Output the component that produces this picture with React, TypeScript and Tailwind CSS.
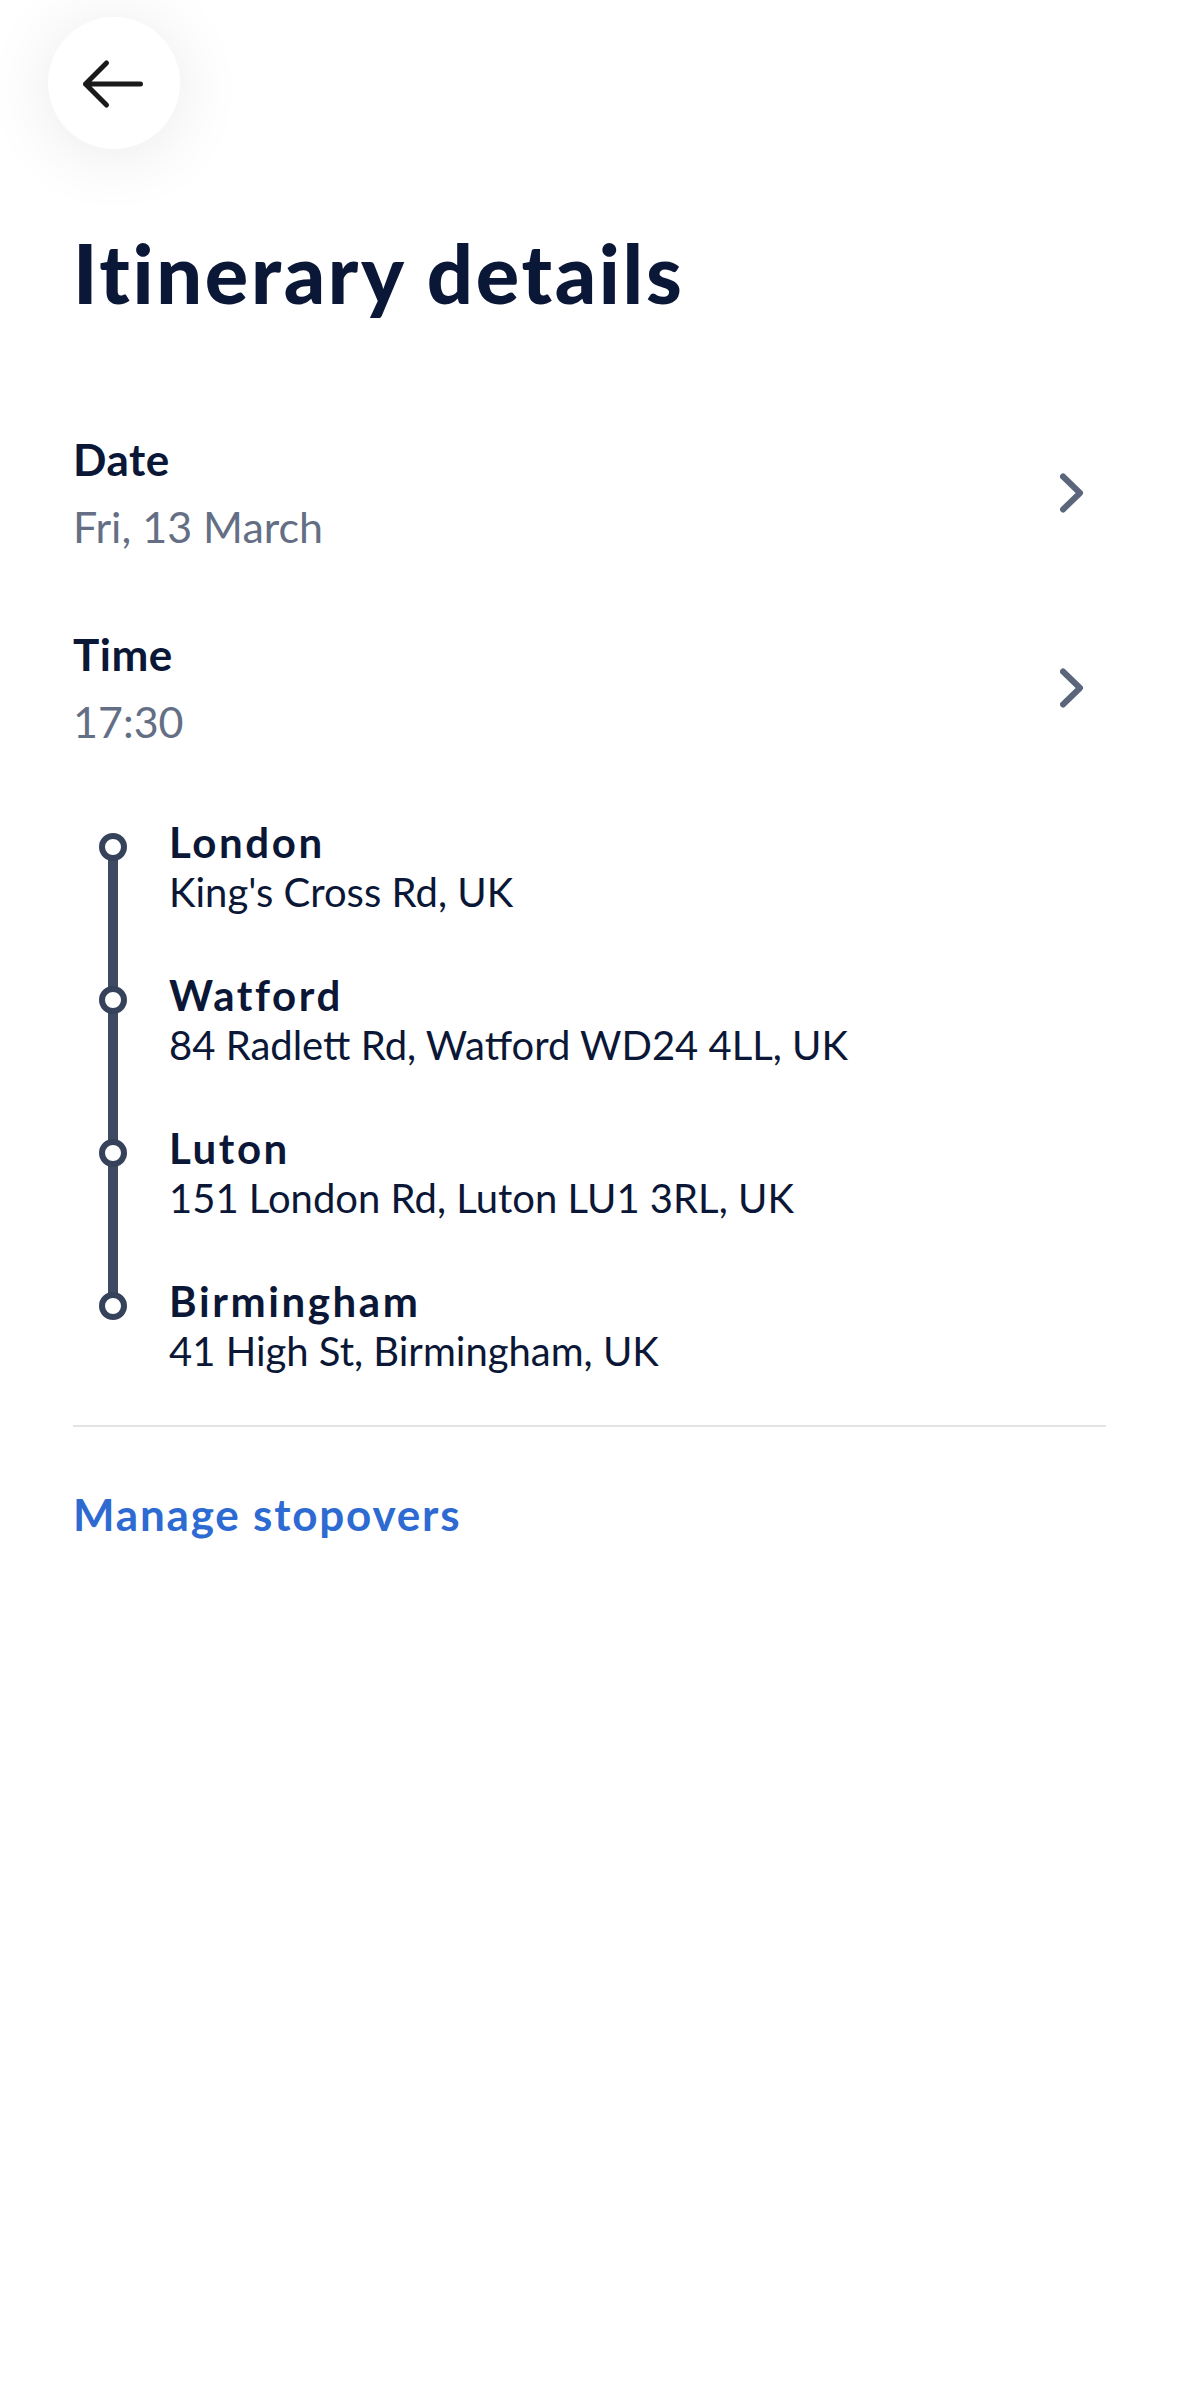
import React from 'react';

interface Stop {
  city: string;
  address: string;
}

const stops: Stop[] = [
  { city: 'London', address: "King's Cross Rd, UK" },
  { city: 'Watford', address: '84 Radlett Rd, Watford WD24 4LL, UK' },
  { city: 'Luton', address: '151 London Rd, Luton LU1 3RL, UK' },
  { city: 'Birmingham', address: '41 High St, Birmingham, UK' },
];

const Chevron: React.FC = () => (
  <svg width="32" height="48" viewBox="0 0 32 48" fill="none" className="shrink-0">
    <path d="M3 7.5L20 24L3 40.5" stroke="#5b667c" strokeWidth="6" strokeLinecap="round" strokeLinejoin="round" />
  </svg>
);

const DetailRow: React.FC<{ label: string; value: string }> = ({ label, value }) => (
  <button className="w-full flex items-center justify-between pr-[14px] text-left">
    <div className="flex flex-col">
      <span className="text-[44px] leading-[53px] font-bold tracking-[0.5px] text-[#0b1736]">{label}</span>
      <span className="mt-[15px] text-[43px] leading-[52px] text-[#646f85]">{value}</span>
    </div>
    <Chevron />
  </button>
);

const App: React.FC = () => {
  return (
    <div className="min-h-[2396px] bg-white font-['Lato',sans-serif]">
      {/* Top bar */}
      <div className="pt-[17px] pl-[48px]">
        <button className="w-[132px] h-[132px] rounded-full bg-white shadow-[0_6px_70px_rgba(0,0,0,0.09)] flex items-center justify-center">
          <svg width="132" height="132" viewBox="0 0 132 132" fill="none">
            <path d="M92.5 67H37.5M58.5 46L37.5 67L58.5 88" stroke="#1a1a1a" strokeWidth="5" strokeLinecap="round" strokeLinejoin="round" />
          </svg>
        </button>
      </div>

      <div className="px-[73px]">
        <h1 className="mt-[83px] text-[81px] leading-[81px] font-black text-[#0b1736] tracking-[2.7px]">
          Itinerary details
        </h1>

        <div className="mt-[120px]">
          <DetailRow label="Date" value="Fri, 13 March" />
        </div>
        <div className="mt-[75px]">
          <DetailRow label="Time" value="17:30" />
        </div>

        {/* Route */}
        <div className="relative mt-[68px] flex flex-col gap-[53px]">
          <div className="absolute left-[35px] top-[31px] bottom-[69px] w-[10px] bg-[#3d4a62]" />
          {stops.map((stop) => (
            <div key={stop.city} className="flex">
              <div className="w-[80px] shrink-0 flex justify-center pt-[17px]">
                <div className="relative w-[28px] h-[28px] rounded-full border-[6px] border-[#35425a] bg-white" />
              </div>
              <div className="pl-[16px] flex flex-col">
                <span className="text-[42px] leading-[52px] font-bold tracking-[2.6px] text-[#0b1736]">{stop.city}</span>
                <span className="text-[40px] leading-[48px] text-[#0b1736]">{stop.address}</span>
              </div>
            </div>
          ))}
        </div>

        <div className="mt-[50px] h-[2px] bg-[#e4e4e6]" />

        <button className="mt-[61px] text-[44px] leading-[53px] font-bold tracking-[1.8px] text-[#2d6ad2]">
          Manage stopovers
        </button>
      </div>
    </div>
  );
};

export default App;
